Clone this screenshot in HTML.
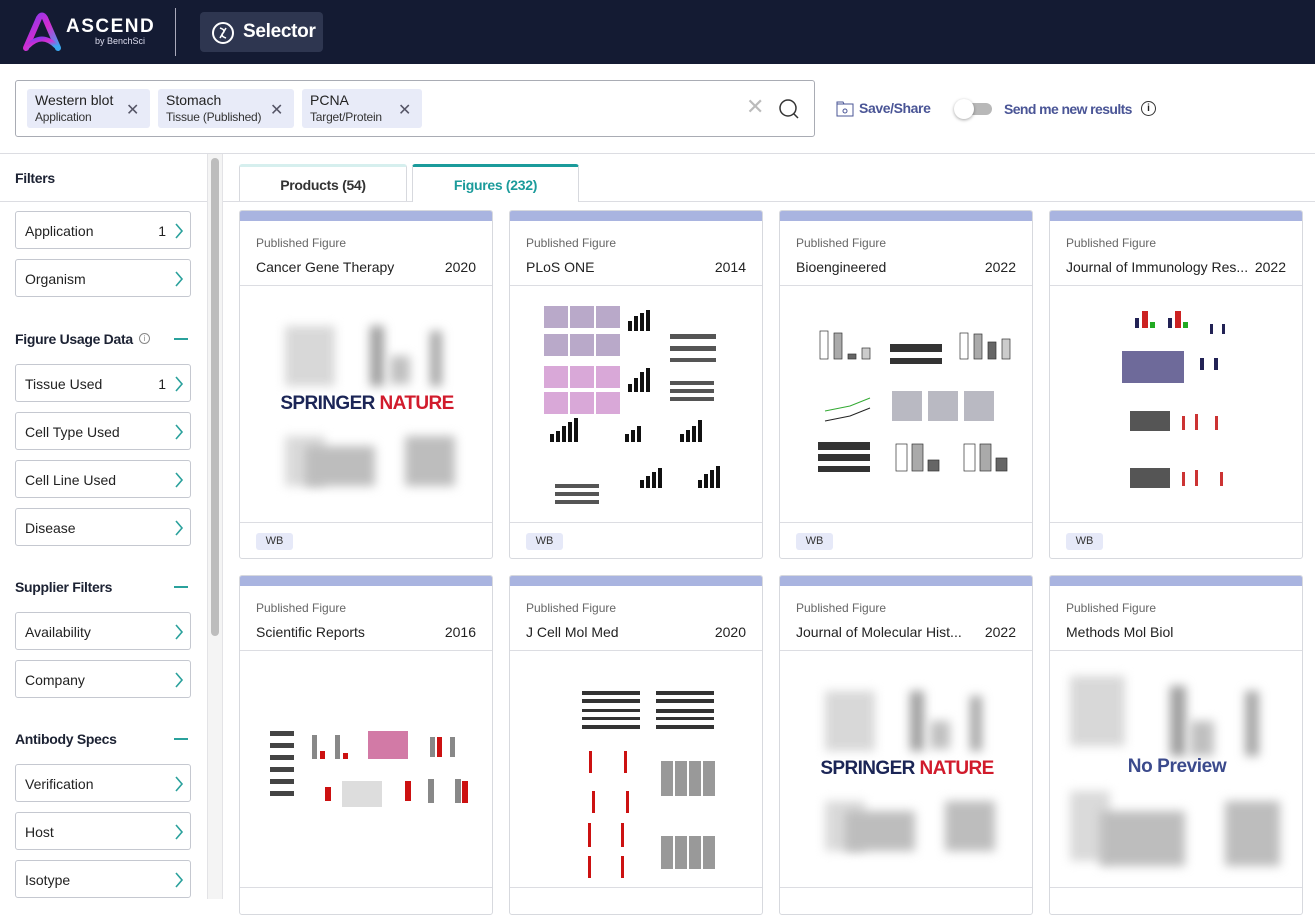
<!DOCTYPE html>
<html><head><meta charset="utf-8">
<style>
*{box-sizing:border-box;margin:0;padding:0}
body{width:1315px;height:899px;overflow:hidden;background:#fff;font-family:"Liberation Sans",sans-serif;color:#222;position:relative}
.abs{position:absolute}
.hdr{left:0;top:0;width:1315px;height:64px;background:#141b33}
.chip{position:absolute;top:89px;height:39px;background:#e8ebf8;border-radius:3px;padding:3px 0 0 8px}
.chip .a{font-size:14px;color:#222}
.chip .b{font-size:12px;color:#333;margin-top:2px;letter-spacing:-0.2px}
.chip .x{position:absolute;top:11px;font-size:16px;color:#556}
.side h3{position:absolute;left:15px;font-size:14px;font-weight:bold;color:#1c2233;letter-spacing:-0.3px}
.fb{position:absolute;left:15px;width:176px;height:38px;border:1px solid #c5c8d0;border-radius:3px;font-size:14px;padding:11px 0 0 9px;color:#222}
.fb .n{position:absolute;right:24px;top:11px}
.fb svg{position:absolute;right:6px;top:11px}
.minus{position:absolute;left:174px;width:14px;height:2px;background:#2aa19c}
.card{position:absolute;width:254px;border:1px solid #d7d9de;border-radius:3px;background:#fff;overflow:hidden}
.card .top{height:10px;background:#a9b4e0}
.card .pf{position:absolute;left:16px;top:25px;font-size:12px;color:#666}
.card .jn{position:absolute;left:16px;top:48px;font-size:14px;color:#222}
.card .yr{position:absolute;right:16px;top:48px;font-size:14px;color:#222}
.card .ln1{position:absolute;left:0;top:74px;width:254px;height:1px;background:#dcdde2}
.card .img{position:absolute;left:0;top:75px;width:254px;height:237px;overflow:hidden}
.card .ln2{position:absolute;left:0;top:311px;width:254px;height:1px;background:#dcdde2}
.wb{position:absolute;left:16px;top:322px;width:37px;height:17px;background:#e6e9f8;border-radius:3px;font-size:11px;color:#333;text-align:center;line-height:17px}
.blur{position:absolute;filter:blur(5px);background:#bdbdbd}
.sn{position:absolute;left:0;width:254px;text-align:center;font-weight:bold;font-size:19px;letter-spacing:-0.6px}
</style></head><body>

<div class="abs hdr"></div>
<svg class="abs" style="left:22px;top:12px" width="44" height="40" viewBox="0 0 44 40">
<defs><linearGradient id="g" x1="0" y1="0" x2="1" y2="1"><stop offset="0" stop-color="#7a3cf0"/><stop offset=".5" stop-color="#d62bd0"/><stop offset="1" stop-color="#3aa7f0"/></linearGradient></defs>
<path d="M4 36 L17 6 Q20 1 23 6 L36 36" fill="none" stroke="url(#g)" stroke-width="6" stroke-linecap="round"/>
<path d="M6 34 Q20 20 34 34" fill="none" stroke="url(#g)" stroke-width="5" stroke-linecap="round"/>
</svg>
<div class="abs" style="left:66px;top:16px;color:#fff;font-size:19px;font-weight:bold;letter-spacing:1.5px">ASCEND</div>
<div class="abs" style="left:95px;top:36px;color:#dde;font-size:9px">by BenchSci</div>
<div class="abs" style="left:175px;top:8px;width:1px;height:48px;background:#aab"></div>
<div class="abs" style="left:200px;top:12px;width:123px;height:40px;background:#2e3650;border-radius:4px"></div>
<svg class="abs" style="left:211px;top:21px" width="24" height="24" viewBox="0 0 24 24"><circle cx="12" cy="12" r="10" fill="none" stroke="#fff" stroke-width="2"/><path d="M9 7 Q15 9 12 12 Q9 15 15 17 M15 7 L9 17" fill="none" stroke="#fff" stroke-width="1.6"/></svg>
<div class="abs" style="left:243px;top:21px;color:#fff;font-size:19px;font-weight:bold;letter-spacing:-0.3px">Selector</div>

<div class="abs" style="left:15px;top:80px;width:800px;height:57px;border:1px solid #a9acb4;border-radius:3px"></div>
<div class="chip" style="left:27px;width:123px"><div class="a">Western blot</div><div class="b">Application</div><div class="x" style="left:99px">✕</div></div>
<div class="chip" style="left:158px;width:136px"><div class="a">Stomach</div><div class="b">Tissue (Published)</div><div class="x" style="left:112px">✕</div></div>
<div class="chip" style="left:302px;width:120px"><div class="a">PCNA</div><div class="b">Target/Protein</div><div class="x" style="left:96px">✕</div></div>
<div class="abs" style="left:746px;top:96px;font-size:22px;color:#bbb;line-height:22px">✕</div>
<svg class="abs" style="left:778px;top:98px" width="22" height="22" viewBox="0 0 22 22"><circle cx="10" cy="10" r="8" fill="none" stroke="#333" stroke-width="1.5"/><path d="M16 16 L20 20" stroke="#333" stroke-width="1.5"/></svg>
<svg class="abs" style="left:836px;top:101px" width="18" height="16" viewBox="0 0 18 16"><rect x="1" y="3" width="16" height="12" fill="none" stroke="#4a5596" stroke-width="1"/><path d="M1 3 L1 1 L7 1 L8 3" fill="none" stroke="#4a5596"/><circle cx="9" cy="10" r="2" fill="none" stroke="#4a5596"/></svg>
<div class="abs" style="left:859px;top:100px;font-size:14px;font-weight:bold;color:#4a5596;letter-spacing:-0.4px">Save/Share</div>
<div class="abs" style="left:960px;top:103px;width:32px;height:12px;border-radius:6px;background:#b8b8b8"></div>
<div class="abs" style="left:954px;top:99px;width:20px;height:20px;border-radius:10px;background:#fff;box-shadow:0 1px 3px rgba(0,0,0,.35)"></div>
<div class="abs" style="left:1004px;top:101px;font-size:14px;font-weight:bold;color:#4a5596;letter-spacing:-0.6px">Send me new results</div>
<div class="abs" style="left:1141px;top:101px;width:15px;height:15px;border:1.3px solid #333;border-radius:50%;font-size:10px;text-align:center;line-height:13px;font-weight:bold">i</div>
<div class="abs" style="left:0;top:153px;width:1315px;height:1px;background:#dcdde2"></div>

<!-- sidebar -->
<div class="side">
<div class="abs" style="left:0;top:201px;width:207px;height:1px;background:#dcdde2"></div>
<div class="abs" style="left:207px;top:154px;width:1px;height:745px;background:#e3e3e6"></div>
<div class="abs" style="left:208px;top:154px;width:14px;height:745px;background:#f4f4f4"></div>
<div class="abs" style="left:211px;top:158px;width:8px;height:478px;background:#bdbdbd;border-radius:4px"></div>
<div class="abs" style="left:222px;top:154px;width:1px;height:745px;background:#e3e3e6"></div>
<h3 style="top:170px">Filters</h3>
<div class="fb" style="top:211px">Application<span class="n">1</span><svg width="10" height="16"><path d="M2 1 L8 8 L2 15" fill="none" stroke="#2aa19c" stroke-width="1.6"/></svg></div>
<div class="fb" style="top:259px">Organism<svg width="10" height="16"><path d="M2 1 L8 8 L2 15" fill="none" stroke="#2aa19c" stroke-width="1.6"/></svg></div>
<h3 style="top:331px">Figure Usage Data</h3>
<div class="abs" style="left:139px;top:333px;width:11px;height:11px;border:1px solid #888;border-radius:50%;font-size:8px;text-align:center;line-height:9px;color:#888">i</div>
<div class="minus" style="top:338px"></div>
<div class="fb" style="top:364px">Tissue Used<span class="n">1</span><svg width="10" height="16"><path d="M2 1 L8 8 L2 15" fill="none" stroke="#2aa19c" stroke-width="1.6"/></svg></div>
<div class="fb" style="top:412px">Cell Type Used<svg width="10" height="16"><path d="M2 1 L8 8 L2 15" fill="none" stroke="#2aa19c" stroke-width="1.6"/></svg></div>
<div class="fb" style="top:460px">Cell Line Used<svg width="10" height="16"><path d="M2 1 L8 8 L2 15" fill="none" stroke="#2aa19c" stroke-width="1.6"/></svg></div>
<div class="fb" style="top:508px">Disease<svg width="10" height="16"><path d="M2 1 L8 8 L2 15" fill="none" stroke="#2aa19c" stroke-width="1.6"/></svg></div>
<h3 style="top:579px">Supplier Filters</h3>
<div class="minus" style="top:586px"></div>
<div class="fb" style="top:612px">Availability<svg width="10" height="16"><path d="M2 1 L8 8 L2 15" fill="none" stroke="#2aa19c" stroke-width="1.6"/></svg></div>
<div class="fb" style="top:660px">Company<svg width="10" height="16"><path d="M2 1 L8 8 L2 15" fill="none" stroke="#2aa19c" stroke-width="1.6"/></svg></div>
<h3 style="top:731px">Antibody Specs</h3>
<div class="minus" style="top:738px"></div>
<div class="fb" style="top:764px">Verification<svg width="10" height="16"><path d="M2 1 L8 8 L2 15" fill="none" stroke="#2aa19c" stroke-width="1.6"/></svg></div>
<div class="fb" style="top:812px">Host<svg width="10" height="16"><path d="M2 1 L8 8 L2 15" fill="none" stroke="#2aa19c" stroke-width="1.6"/></svg></div>
<div class="fb" style="top:860px">Isotype<svg width="10" height="16"><path d="M2 1 L8 8 L2 15" fill="none" stroke="#2aa19c" stroke-width="1.6"/></svg></div>
</div>

<!-- tabs -->
<div class="abs" style="left:239px;top:164px;width:168px;height:37px;border:1px solid #d7d9de;border-top:3px solid #d6efee;border-bottom:none;border-radius:3px 3px 0 0;text-align:center;font-size:14px;font-weight:bold;color:#333;padding-top:10px;letter-spacing:-0.3px">Products (54)</div>
<div class="abs" style="left:412px;top:164px;width:167px;height:38px;border:1px solid #d7d9de;border-top:3px solid #1b9b9b;border-bottom:none;background:#fff;border-radius:3px 3px 0 0;text-align:center;font-size:14px;font-weight:bold;color:#1b9b9b;padding-top:10px;letter-spacing:-0.3px">Figures (232)</div>
<div class="abs" style="left:223px;top:201px;width:189px;height:1px;background:#dcdde2"></div>
<div class="abs" style="left:579px;top:201px;width:736px;height:1px;background:#dcdde2"></div>

<!-- row1 -->
<div class="card" style="left:239px;top:210px;height:349px"><div class="top"></div>
<div class="pf">Published Figure</div><div class="jn">Cancer Gene Therapy</div><div class="yr">2020</div><div class="ln1"></div>
<div class="img">
<div class="blur" style="left:45px;top:40px;width:50px;height:60px;background:#d8d8d8"></div>
<div class="blur" style="left:130px;top:40px;width:14px;height:60px;background:#a0a0a0"></div>
<div class="blur" style="left:150px;top:70px;width:20px;height:28px;background:#c0c0c0"></div>
<div class="blur" style="left:190px;top:45px;width:12px;height:55px;background:#a8a8a8"></div>
<div class="blur" style="left:45px;top:150px;width:40px;height:50px;background:#dadada"></div>
<div class="blur" style="left:65px;top:160px;width:70px;height:40px;background:#bdbdbd"></div>
<div class="blur" style="left:165px;top:150px;width:50px;height:50px;background:#bdbdbd"></div>
<div class="sn" style="top:107px"><span style="color:#1b2556">SPRINGER</span> <span style="color:#d11b2c">NATURE</span></div>
</div><div class="ln2"></div><div class="wb">WB</div></div>

<div class="card" style="left:509px;top:210px;height:349px"><div class="top"></div>
<div class="pf">Published Figure</div><div class="jn">PLoS ONE</div><div class="yr">2014</div><div class="ln1"></div>
<div class="img"><svg width="254" height="237">
<g fill="#b9a9c9"><rect x="34" y="20" width="24" height="22"/><rect x="60" y="20" width="24" height="22"/><rect x="86" y="20" width="24" height="22"/><rect x="34" y="48" width="24" height="22"/><rect x="60" y="48" width="24" height="22"/><rect x="86" y="48" width="24" height="22"/></g>
<g fill="#d9a8d8"><rect x="34" y="80" width="24" height="22"/><rect x="60" y="80" width="24" height="22"/><rect x="86" y="80" width="24" height="22"/><rect x="34" y="106" width="24" height="22"/><rect x="60" y="106" width="24" height="22"/><rect x="86" y="106" width="24" height="22"/></g>
<g fill="#111"><rect x="118" y="35" width="4" height="10"/><rect x="124" y="30" width="4" height="15"/><rect x="130" y="27" width="4" height="18"/><rect x="136" y="24" width="4" height="21"/><rect x="118" y="98" width="4" height="8"/><rect x="124" y="92" width="4" height="14"/><rect x="130" y="86" width="4" height="20"/><rect x="136" y="82" width="4" height="24"/>
<rect x="40" y="148" width="4" height="8"/><rect x="46" y="145" width="4" height="11"/><rect x="52" y="140" width="4" height="16"/><rect x="58" y="136" width="4" height="20"/><rect x="64" y="132" width="4" height="24"/>
<rect x="115" y="148" width="4" height="8"/><rect x="121" y="144" width="4" height="12"/><rect x="127" y="140" width="4" height="16"/>
<rect x="170" y="148" width="4" height="8"/><rect x="176" y="144" width="4" height="12"/><rect x="182" y="140" width="4" height="16"/><rect x="188" y="134" width="4" height="22"/>
<rect x="130" y="194" width="4" height="8"/><rect x="136" y="190" width="4" height="12"/><rect x="142" y="186" width="4" height="16"/><rect x="148" y="182" width="4" height="20"/>
<rect x="188" y="194" width="4" height="8"/><rect x="194" y="188" width="4" height="14"/><rect x="200" y="184" width="4" height="18"/><rect x="206" y="180" width="4" height="22"/></g>
<g fill="#555"><rect x="160" y="48" width="46" height="5"/><rect x="160" y="60" width="46" height="5"/><rect x="160" y="72" width="46" height="4"/><rect x="160" y="95" width="44" height="4"/><rect x="160" y="103" width="44" height="4"/><rect x="160" y="111" width="44" height="4"/><rect x="45" y="198" width="44" height="4"/><rect x="45" y="206" width="44" height="4"/><rect x="45" y="214" width="44" height="4"/></g>
</svg></div><div class="ln2"></div><div class="wb">WB</div></div>

<div class="card" style="left:779px;top:210px;height:349px"><div class="top"></div>
<div class="pf">Published Figure</div><div class="jn">Bioengineered</div><div class="yr">2022</div><div class="ln1"></div>
<div class="img"><svg width="254" height="237">
<g stroke="#333" stroke-width=".7"><rect x="40" y="45" width="8" height="28" fill="#fff"/><rect x="54" y="47" width="8" height="26" fill="#aaa"/><rect x="68" y="68" width="8" height="5" fill="#666"/><rect x="82" y="62" width="8" height="11" fill="#ccc"/>
<rect x="180" y="47" width="8" height="26" fill="#fff"/><rect x="194" y="48" width="8" height="25" fill="#aaa"/><rect x="208" y="56" width="8" height="17" fill="#666"/><rect x="222" y="53" width="8" height="20" fill="#ccc"/>
<rect x="116" y="158" width="11" height="27" fill="#fff"/><rect x="132" y="158" width="11" height="27" fill="#aaa"/><rect x="148" y="174" width="11" height="11" fill="#666"/>
<rect x="184" y="158" width="11" height="27" fill="#fff"/><rect x="200" y="158" width="11" height="27" fill="#aaa"/><rect x="216" y="172" width="11" height="13" fill="#666"/></g>
<g fill="#333"><rect x="110" y="58" width="52" height="8"/><rect x="110" y="72" width="52" height="6"/><rect x="38" y="156" width="52" height="8"/><rect x="38" y="168" width="52" height="7"/><rect x="38" y="180" width="52" height="6"/></g>
<path d="M45 125 L70 120 L90 112" stroke="#3a3" fill="none"/><path d="M45 135 L70 130 L90 122" stroke="#222" fill="none"/>
<g fill="#b9b9c2"><rect x="112" y="105" width="30" height="30"/><rect x="148" y="105" width="30" height="30"/><rect x="184" y="105" width="30" height="30"/></g>
</svg></div><div class="ln2"></div><div class="wb">WB</div></div>

<div class="card" style="left:1049px;top:210px;height:349px"><div class="top"></div>
<div class="pf">Published Figure</div><div class="jn">Journal of Immunology Res...</div><div class="yr">2022</div><div class="ln1"></div>
<div class="img"><svg width="254" height="237">
<rect x="85" y="32" width="4" height="10" fill="#225"/><rect x="92" y="25" width="6" height="17" fill="#c22"/><rect x="100" y="36" width="5" height="6" fill="#2a2"/>
<rect x="118" y="32" width="4" height="10" fill="#225"/><rect x="125" y="25" width="6" height="17" fill="#c22"/><rect x="133" y="36" width="5" height="6" fill="#2a2"/>
<rect x="72" y="65" width="62" height="32" fill="#6e6a9a"/>
<g fill="#555"><rect x="80" y="125" width="40" height="20"/><rect x="80" y="182" width="40" height="20"/></g>
<g fill="#c33"><rect x="132" y="130" width="3" height="14"/><rect x="145" y="128" width="3" height="16"/><rect x="165" y="130" width="3" height="14"/><rect x="132" y="186" width="3" height="14"/><rect x="145" y="184" width="3" height="16"/><rect x="170" y="186" width="3" height="14"/></g>
<g fill="#225"><rect x="160" y="38" width="3" height="10"/><rect x="172" y="38" width="3" height="10"/><rect x="150" y="72" width="4" height="12"/><rect x="164" y="72" width="4" height="12"/></g>
</svg></div><div class="ln2"></div><div class="wb">WB</div></div>

<!-- row2 -->
<div class="card" style="left:239px;top:575px;height:340px"><div class="top"></div>
<div class="pf">Published Figure</div><div class="jn">Scientific Reports</div><div class="yr">2016</div><div class="ln1"></div>
<div class="img"><svg width="254" height="237">
<g fill="#444"><rect x="30" y="80" width="24" height="5"/><rect x="30" y="92" width="24" height="5"/><rect x="30" y="104" width="24" height="5"/><rect x="30" y="116" width="24" height="5"/><rect x="30" y="128" width="24" height="5"/><rect x="30" y="140" width="24" height="5"/></g>
<g fill="#888"><rect x="72" y="84" width="5" height="24"/><rect x="95" y="84" width="5" height="24"/><rect x="190" y="86" width="5" height="20"/><rect x="210" y="86" width="5" height="20"/><rect x="188" y="128" width="6" height="24"/><rect x="215" y="128" width="6" height="24"/></g>
<g fill="#c11"><rect x="80" y="100" width="5" height="8"/><rect x="103" y="102" width="5" height="6"/><rect x="197" y="86" width="5" height="20"/><rect x="222" y="130" width="6" height="22"/><rect x="85" y="136" width="6" height="14"/><rect x="165" y="130" width="6" height="20"/></g>
<rect x="128" y="80" width="40" height="28" fill="#d27aa6"/>
<rect x="102" y="130" width="40" height="26" fill="#ddd"/>
</svg></div><div class="ln2"></div></div>

<div class="card" style="left:509px;top:575px;height:340px"><div class="top"></div>
<div class="pf">Published Figure</div><div class="jn">J Cell Mol Med</div><div class="yr">2020</div><div class="ln1"></div>
<div class="img"><svg width="254" height="237">
<g fill="#333"><rect x="72" y="40" width="58" height="4"/><rect x="72" y="48" width="58" height="4"/><rect x="72" y="58" width="58" height="3"/><rect x="72" y="66" width="58" height="3"/><rect x="72" y="74" width="58" height="4"/><rect x="146" y="40" width="58" height="4"/><rect x="146" y="48" width="58" height="4"/><rect x="146" y="58" width="58" height="4"/><rect x="146" y="66" width="58" height="3"/><rect x="146" y="74" width="58" height="4"/></g>
<g fill="#c11"><rect x="79" y="100" width="3" height="22"/><rect x="114" y="100" width="3" height="22"/><rect x="82" y="140" width="3" height="22"/><rect x="116" y="140" width="3" height="22"/><rect x="78" y="172" width="3" height="24"/><rect x="111" y="172" width="3" height="24"/><rect x="78" y="205" width="3" height="22"/><rect x="111" y="205" width="3" height="22"/></g>
<g fill="#999"><rect x="151" y="110" width="12" height="35"/><rect x="165" y="110" width="12" height="35"/><rect x="179" y="110" width="12" height="35"/><rect x="193" y="110" width="12" height="35"/><rect x="151" y="185" width="12" height="33"/><rect x="165" y="185" width="12" height="33"/><rect x="179" y="185" width="12" height="33"/><rect x="193" y="185" width="12" height="33"/></g>
</svg></div><div class="ln2"></div></div>

<div class="card" style="left:779px;top:575px;height:340px"><div class="top"></div>
<div class="pf">Published Figure</div><div class="jn">Journal of Molecular Hist...</div><div class="yr">2022</div><div class="ln1"></div>
<div class="img">
<div class="blur" style="left:45px;top:40px;width:50px;height:60px;background:#d8d8d8"></div>
<div class="blur" style="left:130px;top:40px;width:14px;height:60px;background:#a0a0a0"></div>
<div class="blur" style="left:150px;top:70px;width:20px;height:28px;background:#c0c0c0"></div>
<div class="blur" style="left:190px;top:45px;width:12px;height:55px;background:#a8a8a8"></div>
<div class="blur" style="left:45px;top:150px;width:40px;height:50px;background:#dadada"></div>
<div class="blur" style="left:65px;top:160px;width:70px;height:40px;background:#bdbdbd"></div>
<div class="blur" style="left:165px;top:150px;width:50px;height:50px;background:#bdbdbd"></div>
<div class="sn" style="top:107px"><span style="color:#1b2556">SPRINGER</span> <span style="color:#d11b2c">NATURE</span></div>
</div><div class="ln2"></div></div>

<div class="card" style="left:1049px;top:575px;height:340px"><div class="top"></div>
<div class="pf">Published Figure</div><div class="jn">Methods Mol Biol</div><div class="ln1"></div>
<div class="img">
<div class="blur" style="left:20px;top:25px;width:55px;height:70px;background:#d8d8d8"></div>
<div class="blur" style="left:120px;top:35px;width:16px;height:70px;background:#a0a0a0"></div>
<div class="blur" style="left:140px;top:70px;width:24px;height:35px;background:#c0c0c0"></div>
<div class="blur" style="left:195px;top:40px;width:14px;height:65px;background:#a8a8a8"></div>
<div class="blur" style="left:20px;top:140px;width:40px;height:70px;background:#dadada"></div>
<div class="blur" style="left:50px;top:160px;width:85px;height:55px;background:#bdbdbd"></div>
<div class="blur" style="left:175px;top:150px;width:55px;height:65px;background:#bdbdbd"></div>
<div class="abs" style="left:0;top:105px;width:254px;text-align:center;font-size:19px;font-weight:bold;color:#3b4a8c;letter-spacing:-0.4px">No Preview</div>
</div><div class="ln2"></div></div>

</body></html>
